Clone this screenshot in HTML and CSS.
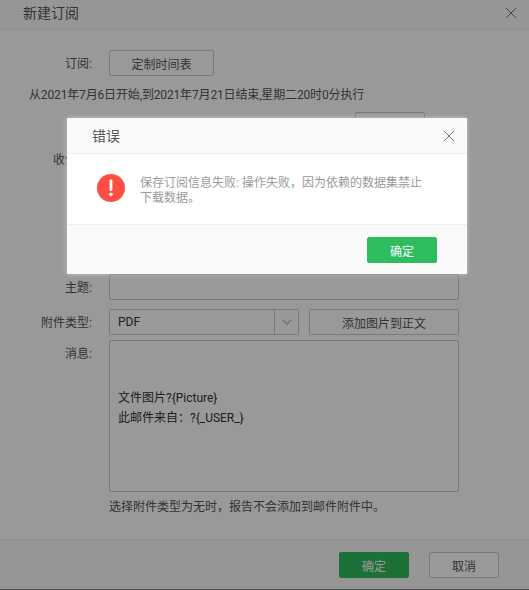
FILE: index.html
```html
<!DOCTYPE html>
<html lang="zh-CN">
<head>
<meta charset="utf-8">
<title>新建订阅</title>
<link rel="stylesheet" href="styles.css">
</head>
<body>
<div class="dialog">
  <header class="dialog-head">
    <span class="dialog-title">新建订阅</span>
    <svg class="close-icon" viewBox="0 0 10 10"><path d="M0 0L10 10M10 0L0 10"/></svg>
  </header>
  <main class="dialog-body">
    <div class="row row-schedule">
      <label class="row-label">订阅:</label>
      <button class="btn btn-schedule">定制时间表</button>
    </div>
    <p class="schedule-text">从2021年7月6日开始,到2021年7月21日结束,星期二20时0分执行</p>
    <div class="row row-end">
      <button class="btn btn-small">添加</button>
    </div>
    <div class="row row-recipients">
      <label class="row-label">收件人:</label>
      <div class="field field-recipients"></div>
    </div>
    <div class="row row-subject">
      <label class="row-label">主题:</label>
      <div class="field field-subject"></div>
    </div>
    <div class="row row-attach">
      <label class="row-label">附件类型:</label>
      <div class="select">
        <span class="select-value">PDF</span>
        <span class="select-arrow">
          <svg viewBox="0 0 10 6"><path d="M1 1L5 5L9 1"/></svg>
        </span>
      </div>
      <button class="btn btn-image">添加图片到正文</button>
    </div>
    <div class="row row-message">
      <label class="row-label">消息:</label>
      <div class="field field-message">
        <div>文件图片?{Picture}</div>
        <div>此邮件来自：?{_USER_}</div>
      </div>
    </div>
    <p class="hint">选择附件类型为无时，报告不会添加到邮件附件中。</p>
  </main>
  <footer class="dialog-foot">
    <button class="btn btn-primary">确定</button>
    <button class="btn btn-cancel">取消</button>
  </footer>
</div>

<div class="overlay"></div>

<div class="modal">
  <header class="modal-head">
    <span class="modal-title">错误</span>
    <svg class="close-icon" viewBox="0 0 10 10"><path d="M0 0L10 10M10 0L0 10"/></svg>
  </header>
  <div class="modal-body">
    <svg class="error-icon" viewBox="0 0 28 28">
      <circle class="error-disc" cx="14" cy="14" r="14"/>
      <rect class="error-mark" x="12.6" y="5.5" width="2.8" height="11.5" rx="1.2"/>
      <circle class="error-mark" cx="14" cy="20.6" r="1.8"/>
    </svg>
    <p class="modal-text">保存订阅信息失败: 操作失败，因为依赖的数据集禁止下载数据。</p>
  </div>
  <footer class="modal-foot">
    <button class="btn btn-primary btn-ok">确定</button>
  </footer>
</div>
</body>
</html>
```

FILE: styles.css
```css
* {
  box-sizing: border-box;
}

html,
body {
  margin: 0;
  height: 590px;
  overflow: hidden;
}

body {
  background: #888;
  font-family: Roboto, "Noto Sans CJK SC", sans-serif;
  font-size: 12px;
  color: #555;
}

p {
  margin: 0;
}

.dialog {
  height: 589px;
  background: #fff;
  display: flex;
  flex-direction: column;
}

.dialog-head {
  height: 30px;
  flex: none;
  padding: 0 13px 4px 23px;
  background: #fafafa;
  border-bottom: 1px solid #eee;
  display: flex;
  align-items: center;
  justify-content: space-between;
}

.dialog-title,
.modal-title {
  font-size: 14px;
  line-height: 20px;
}

.close-icon {
  width: 10px;
  height: 10px;
  fill: none;
  stroke: #777;
  stroke-width: 1;
}

.dialog-body {
  flex: 1;
  padding: 20px 0 0;
}

.row {
  display: flex;
  padding-right: 70px;
}

.row-label {
  width: 92px;
  height: 26px;
  margin-right: 17px;
  flex: none;
  text-align: right;
  line-height: 29px;
}

.btn {
  font: inherit;
  color: #555;
  height: 26px;
  padding: 0;
  background: #fff;
  border: 1px solid #ccc;
  border-radius: 2px;
}

.btn-schedule {
  width: 105px;
}

.schedule-text {
  margin: 9px 0 7px 29px;
  line-height: 20px;
  letter-spacing: -0.15px;
}

.row-end {
  justify-content: flex-end;
  padding-right: 104px;
}

.btn-small {
  width: 70px;
}

.field {
  flex: 1;
  border: 1px solid #ccc;
  border-radius: 2px;
  background: #fff;
}

.row-recipients {
  margin-top: 8px;
}

.field-recipients {
  height: 120px;
}

.row-subject {
  margin-top: 8px;
}

.field-subject {
  height: 26px;
}

.row-attach {
  margin-top: 9px;
}

.select {
  width: 190px;
  height: 26px;
  border: 1px solid #ccc;
  border-radius: 2px;
  display: flex;
  align-items: center;
  justify-content: space-between;
  padding-left: 8px;
  color: #333;
}

.select-arrow {
  width: 24px;
  height: 100%;
  border-left: 1px solid #ccc;
  display: flex;
  align-items: center;
  justify-content: center;
}

.select-arrow svg {
  width: 10px;
  height: 6px;
  fill: none;
  stroke: #bbb;
  stroke-width: 1.4;
}

.btn-image {
  width: 150px;
  margin-left: 10px;
}

.row-message {
  margin-top: 5px;
}

.field-message {
  height: 152px;
  padding: 47px 8px 0;
  line-height: 20px;
  color: #333;
}

.hint {
  margin: 6px 0 0 109px;
  line-height: 18px;
}

.dialog-foot {
  height: 50px;
  flex: none;
  background: #fafafa;
  border-top: 1px solid #eee;
  padding: 12px 30px 0 0;
  display: flex;
  justify-content: flex-end;
  gap: 20px;
}

.btn-primary {
  width: 70px;
  background: #2dbd5e;
  border-color: #2dbd5e;
  color: #fff;
}

.btn-cancel {
  width: 70px;
}

.overlay {
  position: absolute;
  inset: 0;
  background: rgba(0, 0, 0, 0.4);
}

.modal {
  position: absolute;
  left: 67px;
  top: 118px;
  width: 400px;
  height: 156px;
  background: #fff;
  box-shadow: 0 0 5px rgba(255, 255, 255, 0.45);
  display: flex;
  flex-direction: column;
}

.modal-head {
  height: 36px;
  flex: none;
  padding: 0 13px 0 25px;
  background: #fafafa;
  border-bottom: 1px solid #eee;
  display: flex;
  align-items: center;
  justify-content: space-between;
}

.modal-body {
  flex: 1;
  padding: 20px 44px 0 30px;
  display: flex;
  gap: 15px;
}

.error-icon {
  width: 28px;
  height: 28px;
  flex: none;
}

.error-disc {
  fill: #ff4f44;
}

.error-mark {
  fill: #fff;
}

.modal-text {
  color: #999;
  line-height: 15px;
  margin-top: 2px;
}

.modal-foot {
  height: 50px;
  flex: none;
  background: #fafafa;
  border-top: 1px solid #eee;
  padding: 12px 30px 0 0;
  display: flex;
  justify-content: flex-end;
}
```
